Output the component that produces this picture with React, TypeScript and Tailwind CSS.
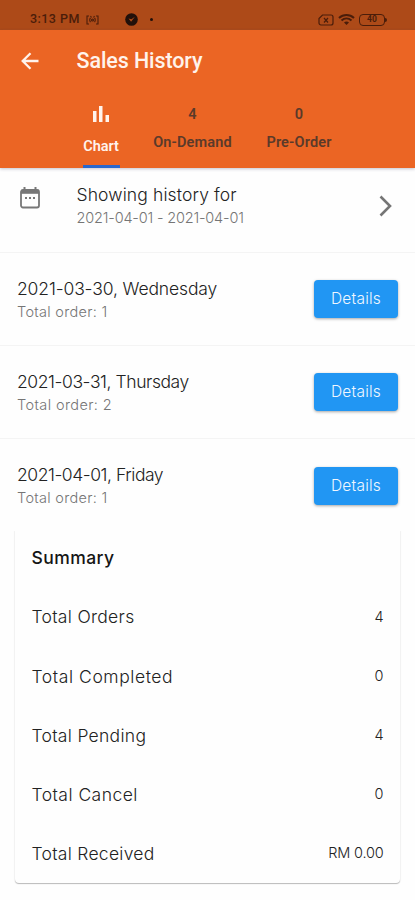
interface TextRow {
  label: string
  value: string
  labelCls: string
  valueCls: string
}

const orders: TextRow[] = [
  { label: '2021-03-30, Wednesday', value: 'Total order: 1', labelCls: 'tracking-[-0.13px]', valueCls: 'tracking-[0.3px]' },
  { label: '2021-03-31, Thursday', value: 'Total order: 2', labelCls: 'tracking-[-0.42px]', valueCls: 'tracking-[0.4px]' },
  { label: '2021-04-01, Friday', value: 'Total order: 1', labelCls: 'tracking-[-0.45px]', valueCls: 'tracking-[0.3px]' },
]

const totals: TextRow[] = [
  { label: 'Total Orders', value: '4', labelCls: 'tracking-[0.3px]', valueCls: '' },
  { label: 'Total Completed', value: '0', labelCls: 'tracking-[0.58px]', valueCls: '' },
  { label: 'Total Pending', value: '4', labelCls: 'tracking-[0.3px]', valueCls: '' },
  { label: 'Total Cancel', value: '0', labelCls: 'tracking-[0.47px]', valueCls: '' },
  { label: 'Total Received', value: 'RM 0.00', labelCls: 'tracking-[0.28px]', valueCls: 'tracking-[-0.2px]' },
]

function StatusBar() {
  return (
    <div className="flex h-[30px] items-center bg-[#ad4a18] pt-[9px] pl-[30px] pr-[28px] text-[#4a1d0a]">
      <span className="w-[50px] whitespace-nowrap text-[12.5px] leading-none font-medium tracking-[0.45px]">3:13 PM</span>
      <svg className="ml-[6px] h-[10px] w-[13px]" viewBox="0 0 13 10" fill="none" stroke="currentColor" strokeWidth="1.1">
        <path d="M3 1H1v8h2M10 1h2v8h-2M4.500 3C3.500 4 3.500 6 4.500 7M8.500 3c1 1 1 3 0 4M4.500 1l1 1.500M8.500 1l-1 1.500" />
        <circle cx="6.500" cy="5" r="1" />
      </svg>
      <svg className="ml-[26px] h-[13px] w-[13px]" viewBox="0 0 13 13">
        <circle cx="6.500" cy="6.500" r="6.300" fill="#21100a" />
        <path d="M3.500 5.500l2.600 3.200 3.800-5-3.500 2.500z" fill="#ad4a18" />
      </svg>
      <span className="ml-[12px] h-[3px] w-[3px] rounded-full bg-[#21100a]" />
      <svg className="ml-auto h-[12px] w-[16px]" viewBox="0 0 16 12" fill="none" stroke="currentColor" strokeWidth="1.2">
        <path d="M4.500 1h8.500a2 2 0 0 1 2 2v6a2 2 0 0 1-2 2H3a2 2 0 0 1-2-2V4.500z" />
        <path d="M6 4l4 4.500M10 4L6 8.500" />
      </svg>
      <svg className="ml-[4px] h-[12px] w-[17px]" viewBox="0 0 17 12" fill="none" stroke="currentColor" strokeWidth="2">
        <path d="M1 4c4.300-4 10.700-4 15 0M3.500 6.500c3-2.700 7-2.700 10 0" />
        <path d="M6 8.500c1.500-1.300 3.500-1.300 5 0L8.500 11z" fill="currentColor" stroke="none" />
      </svg>
      <div className="ml-[4px] flex items-center">
        <span className="flex h-[12px] w-[26px] items-center justify-center rounded-[4px] border-[1.5px] border-current text-[8.5px] leading-none font-bold">
          40
        </span>
        <span className="h-[4px] w-[2px] rounded-r bg-current" />
      </div>
    </div>
  )
}

function Header() {
  return (
    <header className="relative z-10 h-[138px] bg-[#eb6524] shadow-[0_1px_3px_rgba(60,60,100,0.3)]">
      <div className="flex h-[62px] items-center pl-[21px] text-[#fff3ec]">
        <svg className="h-[18px] w-[18px]" viewBox="0 0 18 18" fill="none" stroke="currentColor" strokeWidth="2.3">
          <path d="M17.500 9H2M9.500 1.200L1.700 9l7.800 7.800" />
        </svg>
        <h1 className="ml-[37.500px] text-[21.5px] leading-none font-medium tracking-[-0.1px]">Sales History</h1>
      </div>
      <nav className="flex h-[76px] pl-[82.5px] text-center text-[14.5px] leading-5 font-semibold text-[#5a3a2a]">
        <div className="flex w-[37px] flex-col items-center text-[#fff3ec]">
          <svg className="mt-[14px] h-[16px] w-[16px]" viewBox="0 0 16 16" fill="currentColor">
            <path d="M0 5h3.500v11H0zM6 0h3.500v16H6zM12.500 9H16v7h-3.500z" />
          </svg>
          <span className="mt-[15px] tracking-[-0.1px]">Chart</span>
          <span className="mt-auto h-[3px] w-full bg-[#2866cc]" />
        </div>
        <div className="ml-[33px] w-[80px]">
          <p className="mt-[13px]">4</p>
          <p className="mt-[8px] whitespace-nowrap tracking-[0.15px]">On-Demand</p>
        </div>
        <div className="ml-[33.5px] w-[66px]">
          <p className="mt-[13px]">0</p>
          <p className="mt-[8px] whitespace-nowrap tracking-[0.15px]">Pre-Order</p>
        </div>
      </nav>
    </header>
  )
}

function CalendarIcon() {
  return (
    <svg className="h-[22px] w-[20px]" viewBox="0 0 20 22" fill="none" stroke="#777777">
      <rect x="1" y="3" width="18" height="17.500" rx="2" strokeWidth="1.800" />
      <path d="M1 4.800h18" strokeWidth="4" />
      <path d="M4.500 0v4M15.500 0v4" strokeWidth="2" />
      <path d="M5 11h2M9 11h2M13 11h2" strokeWidth="1.800" />
    </svg>
  )
}

function OrderRow({ row, last }: { row: TextRow; last: boolean }) {
  return (
    <div className={`flex h-[93px] items-center justify-between px-[17px] ${last ? '' : 'border-b border-[#f4f4f4]'}`}>
      <div className="whitespace-nowrap">
        <p className={`text-[17.5px] leading-6 font-light text-[#222222] ${row.labelCls}`}>{row.label}</p>
        <p className={`text-[14.5px] leading-[21px] font-light text-[#757575] ${row.valueCls}`}>{row.value}</p>
      </div>
      <button className="h-[38px] w-[84px] rounded-[4px] bg-[#2196f3] text-[15.5px] font-light tracking-[0.2px] text-[#f0f7ff] shadow-[0_1px_3px_rgba(0,0,0,0.35)]">
        Details
      </button>
    </div>
  )
}

export default function App() {
  return (
    <div className="h-[900px] w-[415px] overflow-hidden bg-[#fefefe] font-[Roboto,sans-serif]">
      <StatusBar />
      <Header />
      <main className="font-[Inter,sans-serif]">
        <div className="flex h-[85px] border-b border-[#f4f4f4] pl-[20px]">
          <div className="mt-[19px]">
            <CalendarIcon />
          </div>
          <div className="mt-[15px] ml-[36.5px] whitespace-nowrap">
            <p className="text-[17.5px] leading-6 font-light tracking-[0.12px] text-[#222222]">Showing history for</p>
            <p className="text-[14.5px] leading-[22px] font-light tracking-[-0.18px] text-[#757575]">2021-04-01 - 2021-04-01</p>
          </div>
          <svg className="mt-[27px] mr-[23px] ml-auto h-[22px] w-[13px]" viewBox="0 0 13 22" fill="none" stroke="#757575" strokeWidth="2.600">
            <path d="M1.500 1.500L11 11l-9.500 9.500" />
          </svg>
        </div>
        {orders.map((row, i) => (
          <OrderRow key={row.label} row={row} last={i === orders.length - 1} />
        ))}
        <section className="mx-[15px] -mt-[4px] h-[355px] rounded-[4px] shadow-[0_1px_1px_rgba(0,0,0,0.25),0_0_2px_rgba(0,0,0,0.1)] [clip-path:inset(3px_-3px_-4px_-3px)]">
          <h2 className="flex h-[60px] items-center pl-[16.5px] text-[17.5px] font-medium tracking-[0.45px] text-[#151515]">Summary</h2>
          {totals.map(row => (
            <div key={row.label} className="flex h-[59.2px] items-center justify-between pr-[16.5px] pl-[16.5px] font-light text-[#222222]">
              <span className={`text-[17.5px] ${row.labelCls}`}>{row.label}</span>
              <span className={`-mt-[2px] text-[14.5px] ${row.valueCls}`}>{row.value}</span>
            </div>
          ))}
        </section>
      </main>
    </div>
  )
}
